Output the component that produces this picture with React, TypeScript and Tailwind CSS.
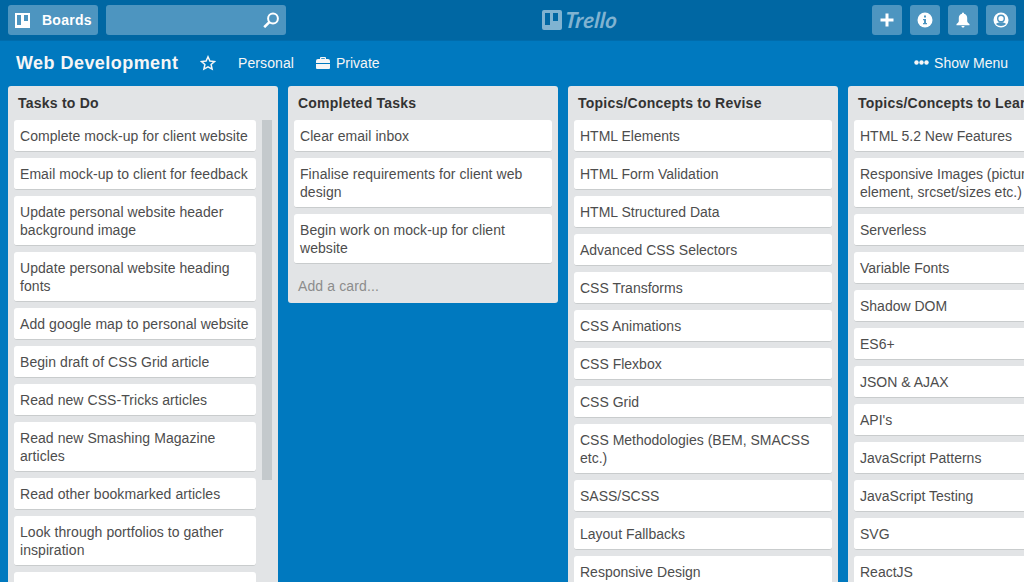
import type { ReactNode } from "react";

type List = { title: string; cards: string[]; scroll?: boolean; addCard?: boolean; spaced?: boolean };

const lists: List[] = [
  {
    title: "Tasks to Do",
    scroll: true,
    spaced: true,
    cards: [
      "Complete mock-up for client website",
      "Email mock-up to client for feedback",
      "Update personal website header background image",
      "Update personal website heading fonts",
      "Add google map to personal website",
      "Begin draft of CSS Grid article",
      "Read new CSS-Tricks articles",
      "Read new Smashing Magazine articles",
      "Read other bookmarked articles",
      "Look through portfolios to gather inspiration",
      "",
    ],
  },
  {
    title: "Completed Tasks",
    addCard: true,
    spaced: true,
    cards: [
      "Clear email inbox",
      "Finalise requirements for client web design",
      "Begin work on mock-up for client website",
    ],
  },
  {
    title: "Topics/Concepts to Revise",
    cards: [
      "HTML Elements",
      "HTML Form Validation",
      "HTML Structured Data",
      "Advanced CSS Selectors",
      "CSS Transforms",
      "CSS Animations",
      "CSS Flexbox",
      "CSS Grid",
      "CSS Methodologies (BEM, SMACSS etc.)",
      "SASS/SCSS",
      "Layout Fallbacks",
      "Responsive Design",
    ],
  },
  {
    title: "Topics/Concepts to Learn",
    scroll: true,
    cards: [
      "HTML 5.2 New Features",
      "Responsive Images (picture element, srcset/sizes etc.)",
      "Serverless",
      "Variable Fonts",
      "Shadow DOM",
      "ES6+",
      "JSON & AJAX",
      "API's",
      "JavaScript Patterns",
      "JavaScript Testing",
      "SVG",
      "ReactJS",
    ],
  },
];

function HeaderButton({ label, children }: { label: string; children: ReactNode }) {
  return (
    <button aria-label={label} className="flex size-[30px] items-center justify-center rounded-[3px] bg-[#4d95c0] text-white">
      {children}
    </button>
  );
}

function Header() {
  return (
    <header className="grid h-[41px] grid-cols-[534px_auto_1fr] items-start bg-[#0067a3] px-2 pt-[5px] shadow-[inset_0_-1px_0_#006cac]">
      <div className="flex gap-2">
        <button className="flex h-[30px] w-[90px] items-center rounded-[3px] bg-[#4d95c0] pl-[7px] text-[14px] font-bold text-white">
          <svg width="15" height="15" viewBox="0 0 15 15" className="mr-[12px]">
            <path fillRule="evenodd" fill="currentColor" d="M0 0h15v15H0zM2 2v10h4V2zM9 2v6h4V2z" />
          </svg>
          <span className="tracking-[0.25px]">Boards</span>
        </button>
        <div className="flex h-[30px] w-[180px] items-center justify-end rounded-[3px] bg-[#4d95c0] pr-[7px] text-white">
          <svg width="16" height="16" viewBox="0 0 16 16" fill="none" stroke="currentColor" strokeWidth="2">
            <circle cx="10" cy="6.500" r="4.900" />
            <path d="M6.600 9.900L1.200 15.200" strokeWidth="2.600" />
          </svg>
        </div>
      </div>
      <div className="flex h-[30px] items-center text-[#80b3d1]">
        <svg width="20" height="20" viewBox="0 0 20 20">
          <path
            fillRule="evenodd"
            fill="currentColor"
            d="M2 0h16a2 2 0 0 1 2 2v16a2 2 0 0 1-2 2H2a2 2 0 0 1-2-2V2a2 2 0 0 1 2-2zM3 3v12h5V3zM11 3v8h5V3z"
          />
        </svg>
        <span className="ml-[3px] w-[53px] font-['Lato'] text-[22px] leading-[30px] font-bold tracking-[0.3px] italic">
          <span className="inline-block -skew-x-6">Trello</span>
        </span>
      </div>
      <div className="flex justify-end gap-2">
        <HeaderButton label="Create">
          <svg width="14" height="14" viewBox="0 0 14 14">
            <path d="M5.500 0.500h3v5h5v3h-5v5h-3v-5h-5v-3h5z" fill="currentColor" />
          </svg>
        </HeaderButton>
        <HeaderButton label="Information">
          <svg width="16" height="16" viewBox="0 0 16 16">
            <circle cx="8" cy="8" r="7.500" fill="currentColor" />
            <path d="M7 3.500h2v2H7zM6 7h3v4h1v1.300H6V11h1V8.200H6z" fill="#4d95c0" />
          </svg>
        </HeaderButton>
        <HeaderButton label="Notifications">
          <svg width="16" height="16" viewBox="0 0 16 16" fill="currentColor">
            <path d="M7 1.200C7 .3 9 .3 9 1.200v.6c2 .5 3.200 2 3.200 4.200v3c0 1.200.8 1.800 2.300 3v1.200H1.500V12C3 10.800 3.800 10.200 3.800 9V6C3.800 3.800 5 2.300 7 1.800z" />
            <path d="M6.500 14h3c0 2-3 2-3 0z" />
          </svg>
        </HeaderButton>
        <HeaderButton label="Account">
          <svg width="16" height="16" viewBox="0 0 16 16">
            <circle cx="8" cy="8" r="7.500" fill="currentColor" />
            <path d="M3 12c1.600-2.400 8.400-2.400 10 0-2.200 2.600-7.800 2.600-10 0z" fill="#4d95c0" />
            <circle cx="8" cy="6.500" r="3.300" fill="currentColor" stroke="#4d95c0" strokeWidth="1.400" />
          </svg>
        </HeaderButton>
      </div>
    </header>
  );
}

function BoardBar() {
  return (
    <div className="flex h-[45px] items-center pr-4 pb-[2px] pl-[16px] text-[14px] leading-[18px] text-[#f6f6f6]">
      <h1 className="w-[184px] text-[18px] font-bold tracking-[0.45px]">Web Development</h1>
      <svg width="16" height="16" viewBox="0 0 16 16" fill="none" stroke="currentColor" strokeWidth="1.500" strokeLinejoin="miter">
        <path d="M8 1.800l1.900 4.200 4.600.5-3.400 3 1 4.600L8 11.800l-4.100 2.300 1-4.600-3.400-3L6.100 6z" />
      </svg>
      <span className="ml-[22px] w-[77px] tracking-[0.1px]">Personal</span>
      <svg width="16" height="14" viewBox="0 0 16 14" fill="currentColor" className="mr-[5px]">
        <path d="M5 3V2q0-1 1-1h4q1 0 1 1v1h2q2 0 2 2v2H1V5q0-2 2-2zm1.200 0h3.600v-.8H6.200z" fillRule="evenodd" />
        <path d="M1 8h14v4q0 1-1 1H2q-1 0-1-1z" />
      </svg>
      <span>Private</span>
      <span className="ml-auto flex items-center gap-[5px]">
        <svg width="15" height="5" viewBox="0 0 15 5" fill="currentColor">
          <circle cx="2.500" cy="2.500" r="2.200" />
          <circle cx="7.500" cy="2.500" r="2.200" />
          <circle cx="12.500" cy="2.500" r="2.200" />
        </svg>
        Show Menu
      </span>
    </div>
  );
}

function ListColumn({ list }: { list: List }) {
  return (
    <section className="flex w-[270px] shrink-0 flex-col rounded-[3px] bg-[#e2e4e6]">
      <h2 className="h-[34px] shrink-0 pt-2 pl-[10px] text-[14px] leading-[18px] font-bold tracking-[0.23px] whitespace-nowrap text-[#333]">
        {list.title}
      </h2>
      <div className="flex items-start gap-[6px] px-[6px]">
        <ul className={list.spaced ? "flex min-w-0 flex-1 flex-col gap-[6px] tracking-[0.06px]" : "flex min-w-0 flex-1 flex-col gap-[6px]"}>
          {list.cards.map((card) => (
            <li
              key={card}
              className="min-h-8 rounded-[3px] border-b border-[#c9cccd] bg-white pt-[7px] pr-[6px] pb-[6px] pl-[6px] text-[14px] leading-[18px] text-[#4d4d4d]"
            >
              {card}
            </li>
          ))}
        </ul>
        {list.scroll && <div className="h-[360px] w-[10px] shrink-0 bg-[#c4c9cc]" />}
      </div>
      {list.addCard && (
        <div className="h-[39px] pt-[13px] pl-[10px] text-[14px] leading-[18px] tracking-[0.12px] text-[#8c8c8c]">Add a card...</div>
      )}
    </section>
  );
}

export default function App() {
  return (
    <div className="flex h-[582px] w-[1024px] flex-col overflow-hidden bg-[#0079bf] font-['Liberation_Sans',Arial,sans-serif]">
      <Header />
      <BoardBar />
      <main className="flex min-h-0 flex-1 items-start gap-[10px] overflow-hidden pl-2">
        {lists.map((list) => (
          <ListColumn key={list.title} list={list} />
        ))}
      </main>
    </div>
  );
}
